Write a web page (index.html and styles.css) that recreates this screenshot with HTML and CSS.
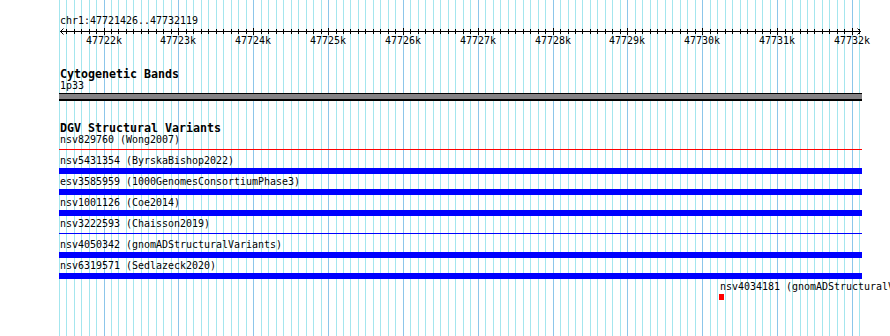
FILE: index.html
```html
<!DOCTYPE html>
<html lang="en">
<head>
    <meta charset="UTF-8">
    <meta name="viewport" content="width=device-width, initial-scale=1.0">
    <title>chr1:47721426..47732119</title>
    <link rel="stylesheet" href="styles.css">
</head>
<body>
    <div class="browser">
        <svg class="grid" id="grid" width="803" height="336"></svg>

        <div class="ruler">
            <div class="label">chr1:47721426..47732119</div>
            <svg class="axis" id="axis" width="803" height="8"></svg>
            <div class="tick-labels" id="tickLabels"></div>
        </div>

        <div class="track cyto">
            <div class="track-title">Cytogenetic Bands</div>
            <div class="label">1p33</div>
            <div class="band"></div>
        </div>

        <div class="track dgv">
            <div class="track-title">DGV Structural Variants</div>
            <div class="feature">
                <div class="label">nsv829760 (Wong2007)</div>
                <div class="glyph"><div class="line loss"></div></div>
            </div>
            <div class="feature">
                <div class="label">nsv5431354 (ByrskaBishop2022)</div>
                <div class="glyph"><div class="bar"></div></div>
            </div>
            <div class="feature">
                <div class="label">esv3585959 (1000GenomesConsortiumPhase3)</div>
                <div class="glyph"><div class="bar"></div></div>
            </div>
            <div class="feature">
                <div class="label">nsv1001126 (Coe2014)</div>
                <div class="glyph"><div class="bar"></div></div>
            </div>
            <div class="feature">
                <div class="label">nsv3222593 (Chaisson2019)</div>
                <div class="glyph"><div class="line gain"></div></div>
            </div>
            <div class="feature">
                <div class="label">nsv4050342 (gnomADStructuralVariants)</div>
                <div class="glyph"><div class="bar"></div></div>
            </div>
            <div class="feature">
                <div class="label">nsv6319571 (Sedlazeck2020)</div>
                <div class="glyph"><div class="bar"></div></div>
            </div>
            <!-- starts at 47730229, so it is shifted along the axis -->
            <div class="feature" style="margin-left: 660px">
                <div class="label">nsv4034181 (gnomADStructuralVariants)</div>
                <div class="glyph"><div class="box"></div></div>
            </div>
        </div>
    </div>

    <script>
        const NS = 'http://www.w3.org/2000/svg';
        const left = 59;          // left edge of the panel on the page
        const firstMajor = 47722; // first labelled tick, in kb
        const grid = document.getElementById('grid');
        const axis = document.getElementById('axis');
        const tickLabels = document.getElementById('tickLabels');

        // one tick every 100 bp, 47722k sits at x=103.5
        function tickX(n) {
            return Math.round(103.5 + n * 7.484) - left;
        }

        function addLine(svg, x1, y1, x2, y2, cls) {
            const line = document.createElementNS(NS, 'line');
            line.setAttribute('x1', x1);
            line.setAttribute('y1', y1);
            line.setAttribute('x2', x2);
            line.setAttribute('y2', y2);
            line.setAttribute('class', cls);
            svg.appendChild(line);
        }

        for (let n = -6; n <= 101; n++) {
            const x = tickX(n) + 0.5;
            const major = n % 10 === 0;
            addLine(grid, x, 0, x, 336, major ? 'major' : 'minor');
            if (n >= -5) {
                addLine(axis, x, major ? 0 : 1, x, major ? 7 : 6, 'tick');
            }
            if (major) {
                const span = document.createElement('span');
                span.className = 'tick-label';
                span.textContent = (firstMajor + n / 10) + 'k';
                span.style.left = (tickX(n) - 18) + 'px';
                tickLabels.appendChild(span);
            }
        }

        // axis line with an arrow head on each end
        addLine(axis, 1, 3.5, 802, 3.5, 'tick');
        const arrows = [
            '4.5,0.5 1.5,3.5 4.5,6.5',
            '798.5,0.5 801.5,3.5 798.5,6.5'
        ];
        arrows.forEach(points => {
            const p = document.createElementNS(NS, 'polyline');
            p.setAttribute('points', points);
            p.setAttribute('class', 'arrow');
            axis.appendChild(p);
        });
    </script>
</body>
</html>
```

FILE: styles.css
```css
html, body {
    margin: 0;
    overflow: hidden;
    background-color: #fff;
}
body {
    font-family: "DejaVu Sans Mono", "Liberation Mono", monospace;
    font-size: 9.97px;
    color: #000;
}
.browser {
    position: relative;
    margin-left: 59px;
    width: 803px;
    height: 336px;
}
.grid {
    position: absolute;
    top: 0;
    left: 0;
    shape-rendering: crispEdges;
}
.grid .minor {
    stroke: #a4e6ee;
    stroke-width: 1;
}
.grid .major {
    stroke: #8cc6ea;
    stroke-width: 1;
}
.ruler,
.track {
    position: relative;
}
.ruler {
    padding-top: 16px;
}
.label {
    height: 12px;
    padding-left: 1px;
    line-height: 10px;
    white-space: nowrap;
}
.axis {
    display: block;
    shape-rendering: crispEdges;
}
.axis .tick {
    stroke: #000;
    stroke-width: 1;
}
.axis .arrow {
    fill: none;
    stroke: #000;
    stroke-width: 1;
    shape-rendering: auto;
}
.tick-labels {
    position: relative;
    height: 12px;
    line-height: 10px;
}
.tick-label {
    position: absolute;
    top: 0;
    white-space: nowrap;
}
.track-title {
    padding-left: 1px;
    font-size: 11.63px;
    font-weight: bold;
    line-height: 13px;
    white-space: nowrap;
}
.cyto {
    margin-top: 20px;
}
.band {
    height: 8px;
    box-sizing: border-box;
    border-top: 1px solid #000;
    border-bottom: 2px solid #000;
    background-color: #858385;
}
.dgv {
    margin-top: 21px;
}
.feature {
    height: 21px;
}
.glyph {
    height: 6px;
}
.bar {
    height: 6px;
    background-color: #00f;
}
.line {
    height: 1px;
    margin-top: 2px;
}
.line.loss {
    background-color: #f00;
}
.line.gain {
    background-color: #00f;
}
.box {
    width: 5px;
    height: 6px;
    background-color: #f00;
}
```
